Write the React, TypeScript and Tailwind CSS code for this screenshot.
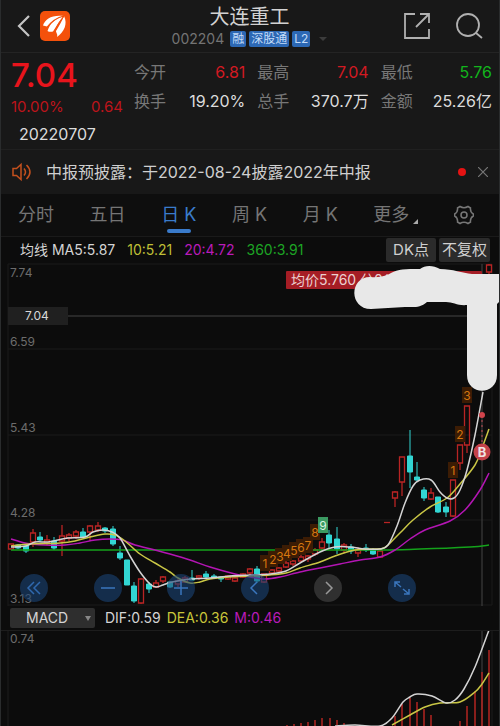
import React from "react";

type Pt = [number, number];

/** Smooth curve through a list of points. */
function curve(p: Pt[]) {
  let d = `M${p[0][0]} ${p[0][1]}`;
  for (let i = 0; i < p.length - 1; i++) {
    const a = p[i - 1] ?? p[i];
    const b = p[i];
    const c = p[i + 1];
    const e = p[i + 2] ?? c;
    d += `C${b[0] + (c[0] - a[0]) / 6} ${b[1] + (c[1] - a[1]) / 6} ${c[0] - (e[0] - b[0]) / 6} ${c[1] - (e[1] - b[1]) / 6} ${c[0]} ${c[1]}`;
  }
  return d;
}

// x, body top, body bottom, wick top, wick bottom
type Candle = [number, number, number, number, number];

const rising: Candle[] = [
  [11, 544, 549, 544, 549], [33, 533, 542, 529, 547], [47, 540, 543, 535, 545], [62, 536, 541, 525, 556],
  [69, 535, 538, 533, 541], [76, 532, 536, 530, 539], [90, 526, 532, 525, 541], [98, 526, 530, 522, 532],
  [141, 579, 603, 578, 604], [156, 583, 587, 580, 588], [163, 577, 581, 576, 583], [178, 581, 584, 579, 587],
  [185, 578, 582, 576, 583], [199, 576, 578, 575, 580], [228, 576, 579, 575, 580], [235, 578, 581, 577, 582],
  [243, 574, 577, 573, 578], [250, 569, 573, 568, 576], [264, 574, 582, 574, 583], [272, 570, 573, 569, 575],
  [279, 568, 571, 567, 572], [286, 563, 567, 561, 568], [293, 561, 564, 560, 566], [301, 557, 561, 554, 563],
  [308, 556, 559, 555, 562], [315, 550, 554, 548, 556], [322, 542, 548, 538, 551], [344, 545, 550, 543, 553],
  [358, 550, 553, 547, 557], [380, 551, 557, 549, 558], [395, 492, 498, 491, 507], [402, 457, 482, 457, 496],
  [431, 493, 499, 488, 500], [453, 480, 516, 480, 517], [460, 445, 463, 445, 470], [467, 406, 445, 406, 453],
  [489, 265, 272, 264, 282],
];

const falling: Candle[] = [
  [18, 545, 548, 544, 549], [26, 546, 551, 545, 553], [40, 537, 540, 532, 542], [54, 541, 548, 537, 550],
  [83, 532, 537, 528, 538], [105, 528, 531, 527, 533], [113, 529, 544, 526, 546], [120, 553, 558, 546, 560],
  [127, 560, 585, 560, 585], [134, 586, 601, 582, 603], [149, 584, 589, 582, 593], [170, 582, 587, 581, 588],
  [192, 578, 580, 570, 580], [206, 574, 577, 571, 579], [214, 576, 578, 574, 579], [221, 577, 579, 576, 582],
  [257, 569, 581, 566, 583], [329, 535, 543, 530, 548], [337, 539, 549, 527, 554], [351, 547, 551, 544, 554],
  [366, 548, 550, 544, 552], [373, 550, 554, 548, 555], [410, 456, 472, 430, 488], [417, 477, 480, 462, 482],
  [424, 490, 498, 487, 501], [438, 497, 512, 497, 513], [446, 507, 512, 502, 517],
];

const ma5: Pt[] = [[11, 547], [26, 546], [35, 542], [48, 542], [58, 540], [68, 538], [85, 537], [93, 532], [103, 530], [112, 532], [120, 538], [130, 556], [140, 572], [150, 584], [156, 587], [163, 585], [172, 582], [190, 579], [210, 578], [230, 576], [250, 575], [270, 574], [286, 571], [300, 563], [320, 552], [335, 547], [350, 547], [365, 549], [380, 549], [388, 545], [397, 526], [405, 503], [413, 486], [420, 480], [431, 480], [440, 492], [447, 498], [454, 498], [460, 490], [467, 470], [475, 435], [483, 392]];
const ma10: Pt[] = [[11, 546], [30, 544], [60, 543], [75, 541], [90, 537], [105, 534], [115, 535], [125, 541], [140, 554], [155, 563], [170, 572], [178, 578], [190, 583], [200, 582], [210, 579], [230, 577], [250, 576], [270, 575], [286, 573], [300, 568], [320, 562], [335, 556], [355, 550], [370, 549], [384, 548], [395, 538], [403, 530], [413, 520], [430, 507], [447, 498], [460, 484], [475, 465], [482, 448], [489, 429]];
const ma20: Pt[] = [[11, 539], [25, 543], [45, 545], [65, 545], [80, 543], [95, 540], [110, 539], [122, 540], [135, 545], [155, 550], [170, 554], [190, 560], [210, 567], [235, 574], [250, 577], [265, 579], [280, 577], [300, 572], [320, 568], [340, 564], [360, 560], [380, 557], [395, 550], [410, 539], [425, 530], [450, 521], [465, 510], [480, 490], [489, 473]];
const ma360: Pt[] = [[11, 550], [350, 550], [420, 549], [470, 547], [489, 545]];
const dif: Pt[] = [[335, 726], [355, 725], [380, 726], [392, 718], [403, 702], [410, 697], [417, 694], [432, 696], [446, 703], [455, 700], [464, 689], [475, 667], [489, 630]];
const dea: Pt[] = [[392, 725], [410, 715], [425, 707], [440, 703], [460, 702], [475, 692], [482, 684], [489, 673]];

const counts: [string, number, number][] = [
  ["1", 265, 568], ["2", 273, 564], ["3", 280, 561], ["4", 287, 558], ["5", 294, 555], ["6", 301, 552], ["7", 308, 550], ["8", 315, 537],
  ["1", 453, 475], ["2", 460, 439], ["3", 467, 400],
];

const bars: Pt[] = [[287, 725], [294, 724], [301, 723], [308, 722], [315, 720], [322, 718], [330, 718], [337, 720], [344, 723], [395, 716], [402, 704], [410, 698], [417, 702], [424, 709], [431, 715], [460, 721], [467, 706], [475, 691], [482, 672], [489, 650]];

const stats = [
  { label: "今开", value: "6.81", tone: "text-[#d21a22]" },
  { label: "最高", value: "7.04", tone: "text-[#d21a22]" },
  { label: "最低", value: "5.76", tone: "text-[#12b51c]" },
  { label: "换手", value: "19.20%", tone: "text-[#dcdcdc]" },
  { label: "总手", value: "370.7万", tone: "text-[#dcdcdc]" },
  { label: "金额", value: "25.26亿", tone: "text-[#dcdcdc]" },
];

function Header() {
  return (
    <header className="grid h-[53px] grid-cols-[1fr_auto_1fr] items-center border-b border-[#242424] bg-[#181818] pl-4 pr-[17px]">
      <div className="flex items-center gap-2">
        <button aria-label="返回">
          <svg className="h-6 w-4" viewBox="0 0 16 24" fill="none" stroke="#c4c4c4" strokeWidth="2.2">
            <path d="M13 2L3 12l10 10" />
          </svg>
        </button>
        <svg className="h-[30px] w-[30px]" viewBox="0 0 30 30">
          <rect width="30" height="30" rx="5" fill="#f4510b" />
          <g fill="#fff">
            <path d="M3 14.500C5 8 12 3.500 24 5C17 7 12 10 7 15.500Z" />
            <path d="M7.500 20C10 12 16 7 24 5C20 9 17 14 13 20.500C11 21 9 21 7.500 20Z" />
            <path d="M17 26C24 21 28 13 24 5C22 10 19 15 16 20C16 22 18 23 17 26Z" />
          </g>
          <path d="M7 16.500C12 9.500 17 6.500 24 5M14.500 21.500C16.500 15 20 10 24 5" fill="none" stroke="#f4510b" strokeWidth="1.100" />
        </svg>
      </div>
      <div className="flex flex-col items-center gap-0.5">
        <h1 className="text-xl leading-6 text-[#d2d2d2]">大连重工</h1>
        <div className="flex items-center gap-[3px] text-sm leading-4">
          <span className="mr-[3px] text-[#747474]">002204</span>
          <span className="rounded-xs bg-[#2c68b4] px-0.5 text-xs leading-4 text-[#c3dcf8]">融</span>
          <span className="rounded-xs bg-[#2c68b4] px-0.5 text-xs leading-4 text-[#c3dcf8]">深股通</span>
          <span className="rounded-xs bg-[#2c68b4] px-0.5 text-xs leading-4 text-[#c3dcf8]">L2</span>
          <svg className="ml-1.5 h-2 w-2" viewBox="0 0 8 8"><path d="M0 2h8L4 6z" fill="#3c3c3c" /></svg>
        </div>
      </div>
      <div className="flex items-center justify-end gap-6">
        <button aria-label="分享">
          <svg className="h-7 w-7" viewBox="0 0 28 28" fill="none" stroke="#b0b0b0" strokeWidth="1.800">
            <path d="M12 2H2v24h24V17M17 2h9v9M26 2L13 15" />
          </svg>
        </button>
        <button aria-label="搜索">
          <svg className="h-7 w-7" viewBox="0 0 28 28" fill="none" stroke="#b0b0b0" strokeWidth="1.800">
            <circle cx="13" cy="13" r="11" /><path d="M21 21l6 5" />
          </svg>
        </button>
      </div>
    </header>
  );
}

function Quote() {
  return (
    <section className="bg-[#181818] pb-0.5 pl-[11px] pr-2 pt-1">
      <div className="flex gap-[11px]">
        <div className="w-28">
          <div className="text-[33px] font-medium leading-9 text-[#e8141c]">7.04</div>
          <div className="flex justify-between text-[15px] leading-7 text-[#bd141b]">
            <span>10.00%</span>
            <span>0.64</span>
          </div>
        </div>
        <dl className="grid flex-1 grid-cols-3 content-start gap-x-3">
          {stats.map((s) => (
            <div key={s.label} className="flex h-[29px] items-center justify-between whitespace-nowrap">
              <dt className="text-base text-[#777]">{s.label}</dt>
              <dd className={`text-base ${s.tone}`}>{s.value}</dd>
            </div>
          ))}
        </dl>
      </div>
      <div className="pl-2 text-base leading-[26px] text-[#dcdcdc]">20220707</div>
    </section>
  );
}

function Notice() {
  return (
    <section className="flex h-[45px] items-center border-t border-[#202020] bg-[#181818] pl-3 pr-3">
      <svg className="h-5 w-5" viewBox="0 0 20 20" fill="none" stroke="#c4501d" strokeWidth="1.500">
        <path d="M1 6.500h3.500L9 2.500v15L4.500 13.500H1zM12 6.500q3 3.500 0 7M14.500 3q7 7 0 14" />
      </svg>
      <a href="#notice" className="ml-3.5 flex-1 text-base text-[#cfcfcf]">中报预披露：于2022-08-24披露2022年中报</a>
      <span className="h-2 w-2 rounded-full bg-[#e51313]" />
      <button aria-label="关闭" className="ml-3">
        <svg className="h-2.5 w-2.5" viewBox="0 0 10 10" stroke="#777" strokeWidth="1.200"><path d="M0 0l10 10M10 0L0 10" /></svg>
      </button>
    </section>
  );
}

function Tabs() {
  const tab = "text-lg leading-[42px] text-[#757575]";
  return (
    <nav className="flex h-[42px] items-center justify-between bg-[#0e0e0e] pl-[18px] pr-[26px]">
      <button className={tab}>分时</button>
      <button className={tab}>五日</button>
      <button className="relative text-lg leading-[42px] text-[#3a7bcb]">
        日 K
        <span className="absolute bottom-[3px] left-1/2 h-1 w-6 -translate-x-1/2 rounded-xs bg-[#3a7bcb]" />
      </button>
      <button className={tab}>周 K</button>
      <button className={tab}>月 K</button>
      <button className="flex items-center gap-1 text-lg leading-[42px] text-[#757575]">
        更多
        <svg className="mt-3 h-[5px] w-[5px]" viewBox="0 0 5 5"><path d="M5 0v5H0z" fill="#aaa" /></svg>
      </button>
      <button aria-label="设置">
        <svg className="h-5 w-5" viewBox="0 0 20 20" fill="none" stroke="#777" strokeWidth="1.500">
          <path d="M6 1.500Q10 4 14 1.500L16.500 3Q16 7 19.300 9V11Q16 13 16.500 17L14 18.500Q10 16 6 18.500L3.500 17Q4 13 .7 11V9Q4 7 3.500 3Z" />
          <circle cx="10" cy="10" r="3" />
        </svg>
      </button>
    </nav>
  );
}

function Legend() {
  return (
    <div className="flex h-[27px] items-center justify-between border-t border-[#1a1a1a] pl-5 pr-2.5">
      <div className="flex gap-3 whitespace-nowrap text-sm">
        <span className="text-[#d4d4d4]">均线 MA5:5.87</span>
        <span className="text-[#bfbf36]">10:5.21</span>
        <span className="text-[#b91bb9]">20:4.72</span>
        <span className="text-[#1da424]">360:3.91</span>
      </div>
      <div className="flex gap-[3px]">
        <button className="h-6 rounded-xs bg-[#2b2b2b] px-[7px] text-[15px] text-[#d0d0d0]">DK点</button>
        <button className="h-6 rounded-xs bg-[#2b2b2b] px-[3px] text-[15px] text-[#d0d0d0]">不复权</button>
      </div>
    </div>
  );
}

function PriceChart() {
  const round = "flex h-7 w-7 items-center justify-center rounded-full bg-[#1b4577]/60";
  return (
    <section className="relative">
      <svg className="block h-auto w-full" viewBox="0 263 500 343" fontSize="12">
        <path d="M8 606V264H492M8 349H492M8 435H492M8 520H492M8 605H492M492 264V605" fill="none" stroke="#1a1a1a" />
        <g fill="#6c6c6c">
          <text x="10" y="277">7.74</text><text x="10" y="346">6.59</text><text x="10" y="432">5.43</text>
          <text x="10" y="517">4.28</text><text x="10" y="603">3.13</text>
        </g>
        <path d="M8 316H492M482 264V606" stroke="#444" fill="none" />
        <rect x="8" y="307" width="60" height="18" fill="#202020" />
        <text x="25" y="320" fill="#d8d8d8">7.04</text>
        <g fill="none" stroke="#b92424" strokeWidth="1.300">
          {rising.map(([x, t, b, h, l]) => (
            <path key={x} d={`M${x - 2.5} ${t}h5V${b}h-5ZM${x} ${h}V${t}M${x} ${b}V${l}`} />
          ))}
          <path d="M384 522.500h6" />
        </g>
        <g fill="#32d6d3" stroke="#32d6d3">
          {falling.map(([x, t, b, h, l]) => (
            <path key={x} d={`M${x - 2.5} ${t}h5V${b}h-5ZM${x} ${h}V${l}`} />
          ))}
        </g>
        <g fill="none" strokeWidth="1.500">
          <path d={curve(ma360)} stroke="#14a31b" />
          <path d={curve(ma20)} stroke="#b315b3" />
          <path d={curve(ma10)} stroke="#c9c645" />
          <path d={curve(ma5)} stroke="#d4d4d4" />
        </g>
        <g textAnchor="middle">
          {counts.map(([n, x, y]) => <rect key={x} x={x - 5} y={y - 13} width="10" height="16" fill="#3c1c04" />)}
          {counts.map(([n, x, y]) => <text key={x} x={x} y={y} fill="#d5760f">{n}</text>)}
          <rect x="318" y="517" width="10" height="16" fill="#3b9a62" />
          <text x="323" y="530" fill="#d8f2e0">9</text>
        </g>
        <path d="M482 415V450" stroke="#c34c55" strokeDasharray="2 3" />
        <circle cx="482" cy="415" r="3" fill="#d0444c" />
        <circle cx="482" cy="452" r="8.500" fill="#c4424a" />
        <text x="482" y="457" textAnchor="middle" fontSize="13" fontWeight="700" fill="#f0e4e4">B</text>
        <rect x="286" y="271" width="196" height="18" rx="1" fill="#a51d25" />
        <text x="291" y="285" fontSize="14" fill="#ecd0d0">均价5.760 分0价</text>
        <path d="M370 277C382 278 387 275 391 273C398 269 405 269 420 269C425 265 433 265 440 269C453 269 462 273 472 274H500V301L497 304V375C497 396 467 396 467 375V305C458 306 453 302 446 302H427C420 308 415 307 405 307L371 309C349 309 349 277 370 277Z" fill="#e8e8e8" />
      </svg>
      <div className="absolute bottom-1 left-0 flex w-full justify-between pl-5 pr-[84px]">
        <button aria-label="最早" className={round}>
          <svg className="h-4 w-4" viewBox="0 0 16 16" fill="none" stroke="#2f68ae" strokeWidth="1.500"><path d="M8 2L2 8l6 6M14 2L8 8l6 6" /></svg>
        </button>
        <button aria-label="缩小" className={round}>
          <svg className="h-4 w-4" viewBox="0 0 16 16" stroke="#3a76bd" strokeWidth="1.500"><path d="M1 8h14" /></svg>
        </button>
        <button aria-label="放大" className={round}>
          <svg className="h-4 w-4" viewBox="0 0 16 16" stroke="#3a76bd" strokeWidth="1.500"><path d="M1 8h14M8 1v14" /></svg>
        </button>
        <button aria-label="向左" className={round}>
          <svg className="h-4 w-4" viewBox="0 0 16 16" fill="none" stroke="#3a76bd" strokeWidth="1.500"><path d="M10 2L4 8l6 6" /></svg>
        </button>
        <button aria-label="向右" className="flex h-7 w-7 items-center justify-center rounded-full bg-[#303030]">
          <svg className="h-4 w-4" viewBox="0 0 16 16" fill="none" stroke="#999" strokeWidth="1.500"><path d="M6 2l6 6-6 6" /></svg>
        </button>
        <button aria-label="全屏" className={round}>
          <svg className="h-4 w-4" viewBox="0 0 16 16" fill="none" stroke="#3a76bd" strokeWidth="1.500"><path d="M1 7V2h5M1 2l6 5M10 14h5V9M15 14L9 9" /></svg>
        </button>
      </div>
    </section>
  );
}

function Macd() {
  return (
    <section>
      <div className="flex h-[25px] items-center gap-2.5 border-b border-[#1d1d1d] pl-2.5 text-sm">
        <div className="relative">
          <select aria-label="指标" className="block h-5 w-[85px] appearance-none rounded-xs bg-[#2e2e2e] pl-4 text-sm leading-5 text-[#d4d4d4]">
            <option>MACD</option>
          </select>
          <svg className="pointer-events-none absolute right-1 top-2 h-[5px] w-1.5" viewBox="0 0 6 5"><path d="M0 0h6L3 5z" fill="#888" /></svg>
        </div>
        <div className="flex gap-1.5">
          <span className="text-[#d4d4d4]">DIF:0.59</span>
          <span className="text-[#c9c63a]">DEA:0.36</span>
          <span className="text-[#b91bb9]">M:0.46</span>
        </div>
      </div>
      <svg className="block h-auto w-full" viewBox="0 631 500 95" fontSize="12">
        <path d="M8 631V726M492 631V726" stroke="#1d1d1d" />
        <path d="M482 631V726" stroke="#444" />
        <text x="10" y="643" fill="#6c6c6c">0.74</text>
        {bars.map(([x, y]) => <path key={x} d={`M${x} ${y}V726`} stroke="#b32421" strokeWidth="1.500" />)}
        <path d={curve(dea)} fill="none" stroke="#c9c645" strokeWidth="1.500" />
        <path d={curve(dif)} fill="none" stroke="#d4d4d4" strokeWidth="1.500" />
      </svg>
    </section>
  );
}

export default function App() {
  return (
    <main className="relative bg-[#0c0c0c] font-['Inter','Noto_Sans_CJK_SC',sans-serif]">
      <Header />
      <Quote />
      <Notice />
      <Tabs />
      <Legend />
      <PriceChart />
      <Macd />
      <div className="pointer-events-none absolute inset-0 border-x border-[#2a2c2d]" />
    </main>
  );
}
